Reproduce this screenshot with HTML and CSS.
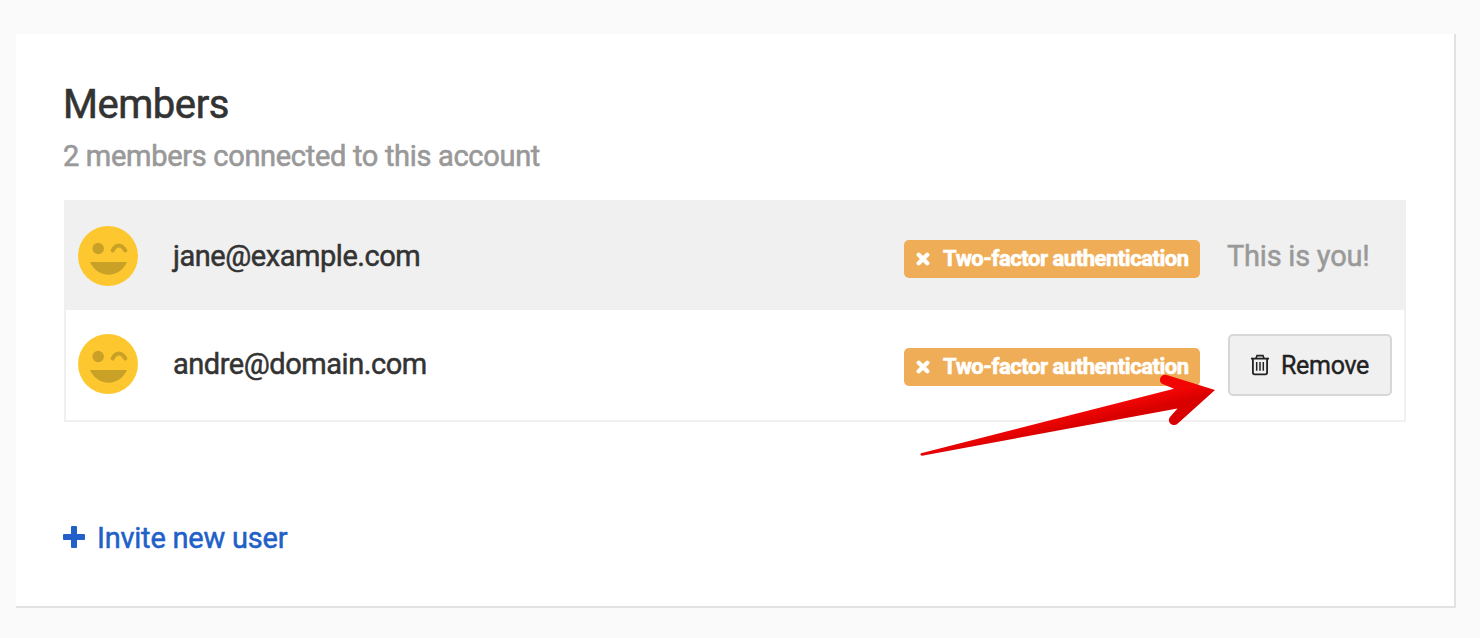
FILE: index.html
```html
<!DOCTYPE html>
<html lang="en">
<head>
<meta charset="utf-8">
<title>Members</title>
<link rel="stylesheet" href="styles.css">
</head>
<body>
<svg class="defs" aria-hidden="true">
  <symbol id="wink" viewBox="0 0 60 60">
    <circle cx="30" cy="30" r="30" fill="#fdc82f"/>
    <circle cx="20.2" cy="22.5" r="5.7" fill="#c9a127"/>
    <path d="M34.600 24.500C38 17.700 43.500 17.700 47.300 24.500" fill="none" stroke="#c9a127" stroke-width="4" stroke-linecap="round"/>
    <path d="M12 36H49C45.500 44 38.500 48.700 30.500 48.700S15.500 44 12 36Z" fill="#c9a127"/>
  </symbol>
  <symbol id="cross" viewBox="0 0 14 14">
    <path d="M2.700 2.700L11.300 11.300M11.300 2.700L2.700 11.300" stroke="#fff" stroke-width="4.300" stroke-linecap="round"/>
  </symbol>
</svg>
<main class="card">
  <h1 class="title">Members</h1>
  <p class="subtitle">2 members connected to this account</p>
  <div class="list">
    <div class="row row-self">
      <svg class="avatar"><use href="#wink"/></svg>
      <span class="email">jane@example.com</span>
      <span class="badge"><svg class="cross"><use href="#cross"/></svg><span class="badge-text">Two-factor authentication</span></span>
      <div class="action"><span class="you">This is you!</span></div>
    </div>
    <div class="row">
      <svg class="avatar"><use href="#wink"/></svg>
      <span class="email">andre@domain.com</span>
      <span class="badge"><svg class="cross"><use href="#cross"/></svg><span class="badge-text">Two-factor authentication</span></span>
      <div class="action">
        <button class="remove" type="button">
          <svg class="trash" viewBox="0 0 20 22" fill="none" stroke="#222">
            <path d="M1 4.600H19" stroke-width="1.800"/>
            <path d="M6 4.500L7 1.600H13L14 4.500" stroke-width="1.600"/>
            <path d="M2.900 5V18.500Q2.900 20.300 4.700 20.300H15.300Q17.100 20.300 17.100 18.500V5" stroke-width="1.800"/>
            <path d="M6.700 8V16.800M10 8V16.800M13.300 8V16.800" stroke-width="1.500"/>
          </svg>
          <span class="remove-text">Remove</span>
        </button>
      </div>
    </div>
  </div>
  <a class="invite">
    <svg class="plus" viewBox="0 0 22 22"><path d="M9 0h4a1 1 0 0 1 1 1v7h7a1 1 0 0 1 1 1v4a1 1 0 0 1-1 1h-7v7a1 1 0 0 1-1 1H9a1 1 0 0 1-1-1v-7H1a1 1 0 0 1-1-1V9a1 1 0 0 1 1-1h7V1a1 1 0 0 1 1-1z" fill="#2060c8"/></svg>
    <span class="invite-text">Invite new user</span>
  </a>
</main>
<svg class="arrow" viewBox="910 365 320 100" aria-hidden="true">
  <defs>
    <linearGradient id="red" gradientUnits="userSpaceOnUse" x1="1080" y1="404" x2="1086" y2="430">
      <stop offset="0.300" stop-color="#f20505"/>
      <stop offset="0.750" stop-color="#d90000"/>
    </linearGradient>
  </defs>
  <path d="M921 453.300L1174 388.700L1162.500 384C1157.500 381.300 1160.500 373.800 1166 374.800L1215 390L1177.500 423.700C1172 428 1166.500 421.500 1170 417L1177.500 408.500L922 455.700Q919.500 455 921 453.300Z" fill="url(#red)"/>
</svg>
</body>
</html>
```
FILE: styles.css
```css
* { box-sizing: border-box; }
body {
  margin: 0;
  padding: 34px 24px 30px 16px;
  background: #fafafa;
  font-family: Roboto, "Liberation Sans", sans-serif;
  color: #333;
  position: relative;
}
.defs { display: none; }
.card {
  height: 574px;
  padding: 47px 48px 0;
  background: #fff;
  border-right: 2px solid #e2e2e2;
  border-bottom: 2px solid #e2e2e2;
  white-space: nowrap;
}
.title, .subtitle { margin: 0; }
.title { font-size: 40px; line-height: 48px; font-weight: 400; letter-spacing: -0.45px; margin-left: -1px; -webkit-text-stroke: 0.6px; }
.subtitle { font-size: 29px; line-height: 36px; margin: 9px 0 0 -1px; color: #999; letter-spacing: -0.31px; -webkit-text-stroke: 0.6px; }
.list { width: 1342px; margin-top: 26px; border: 2px solid #f0f0f0; }
.row { display: flex; align-items: flex-start; height: 110px; padding: 24px 12px; }
.row-self { height: 108px; background: #f0f0f0; }
.avatar { width: 60px; height: 60px; flex: none; }
.email { margin-left: 35px; font-size: 29px; line-height: 60px; letter-spacing: -0.46px; -webkit-text-stroke: 0.5px; }
.badge {
  display: flex;
  align-items: center;
  width: 296px;
  height: 38px;
  margin: 14px 28px 0 auto;
  padding-left: 12px;
  border-radius: 5px;
  background: #efad57;
  color: #fff;
}
.cross { width: 14px; height: 14px; margin-right: 13px; }
.badge-text { font-size: 22px; line-height: 38px; font-weight: 700; letter-spacing: -0.46px; -webkit-text-stroke: 0.6px; }
.action { width: 164px; }
.you { font-size: 29px; line-height: 60px; color: #999; letter-spacing: -0.23px; margin-left: -1px; -webkit-text-stroke: 0.5px; }
.remove {
  display: flex;
  align-items: center;
  width: 164px;
  height: 62px;
  padding: 0 0 0 20px;
  border: 2px solid #d7d7d7;
  border-radius: 5px;
  background: #f0f0f0;
  color: #222;
  font-family: inherit;
}
.trash { width: 20px; height: 22px; margin-right: 11px; }
.remove-text { font-size: 25px; line-height: 58px; padding-top: 2px; letter-spacing: -0.3px; -webkit-text-stroke: 0.4px; }
.invite { display: flex; align-items: center; margin-top: 98px; height: 36px; color: #2060c8; margin-left: -1px; }
.plus { width: 22px; height: 22px; margin: -2px 12px 0 0; }
.invite-text { font-size: 29px; line-height: 36px; letter-spacing: -0.22px; -webkit-text-stroke: 0.5px; }
.arrow { position: absolute; left: 910px; top: 365px; width: 320px; height: 100px; }
```
